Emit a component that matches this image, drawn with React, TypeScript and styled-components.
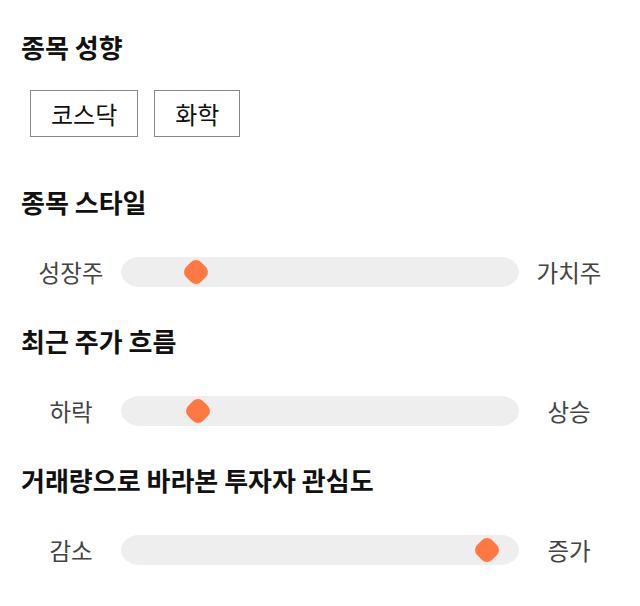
import React from "react";
import styled, { createGlobalStyle } from "styled-components";

const Global = createGlobalStyle`
  html, body { margin: 0; padding: 0; background: #fff; }
  body { font-family: "Noto Sans CJK KR", "Noto Sans", sans-serif; }
`;

const Page = styled.div`
  width: 600px;
  padding: 28px 0 0 21px;
  display: flex;
  flex-direction: column;
`;

const Section = styled.section<{ $gap: number; $after: number }>`
  display: flex;
  flex-direction: column;
  gap: ${(p) => p.$gap}px;
  margin-bottom: ${(p) => p.$after}px;
`;

const Heading = styled.h2`
  margin: 0;
  font-size: 26px;
  line-height: 38px;
  font-weight: 700;
  color: #111;
  white-space: nowrap;
`;

const Chips = styled.div`
  display: flex;
  gap: 16px;
  padding-left: 9px;
`;

const Chip = styled.button`
  height: 47px;
  padding: 0 20px;
  border: 1px solid #888;
  background: #fff;
  font-family: inherit;
  font-size: 24px;
  color: #111;
  cursor: pointer;
`;

const SliderRow = styled.div`
  display: grid;
  grid-template-columns: 100px 398px 100px;
  align-items: center;
  height: 30px;
`;

const SideLabel = styled.span`
  text-align: center;
  font-size: 23.5px;
  color: #444;
  white-space: nowrap;
`;

const Track = styled.div`
  position: relative;
  height: 30px;
  background: #eee;
  border-radius: 18px / 15px;
`;

const Thumb = styled.div`
  position: absolute;
  top: 50%;
  width: 21px;
  height: 21px;
  background: #ff7841;
  border-radius: 7px;
  transform: translate(-50%, -50%) rotate(45deg);
`;

const sliders = [
  { title: "종목 스타일", left: "성장주", right: "가치주", pos: 75 },
  { title: "최근 주가 흐름", left: "하락", right: "상승", pos: 77 },
  { title: "거래량으로 바라본 투자자 관심도", left: "감소", right: "증가", pos: 366 },
];

export default function App() {
  return (
    <>
      <Global />
      <Page>
        <Section $gap={24} $after={46}>
          <Heading>종목 성향</Heading>
          <Chips>
            <Chip>코스닥</Chip>
            <Chip>화학</Chip>
          </Chips>
        </Section>
        {sliders.map((s) => (
          <Section key={s.title} $gap={34} $after={37}>
            <Heading>{s.title}</Heading>
            <SliderRow>
              <SideLabel>{s.left}</SideLabel>
              <Track>
                <Thumb style={{ left: `${(s.pos / 398) * 100}%` }} />
              </Track>
              <SideLabel>{s.right}</SideLabel>
            </SliderRow>
          </Section>
        ))}
      </Page>
    </>
  );
}
